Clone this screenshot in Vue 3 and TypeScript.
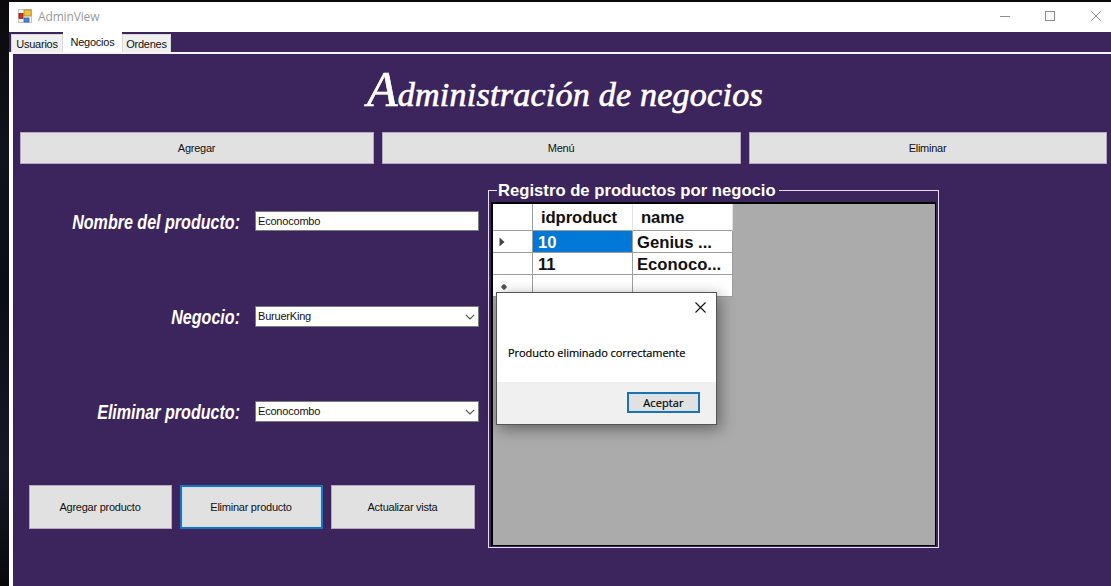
<script setup lang="ts">
import { ref } from 'vue'

interface Field {
  label: string
  value: string
  combo: boolean
}

const tabs = ['Usuarios', 'Negocios', 'Ordenes']
const activeTab = ref('Negocios')
const sections = ['Agregar', 'Menú', 'Eliminar']
const fields: Field[] = [
  { label: 'Nombre del producto:', value: 'Econocombo', combo: false },
  { label: 'Negocio:', value: 'BuruerKing', combo: true },
  { label: 'Eliminar producto:', value: 'Econocombo', combo: true },
]
const actions = ['Agregar producto', 'Eliminar producto', 'Actualizar vista']
const focusedAction = ref('Eliminar producto')
const rows = [
  { id: '10', name: 'Genius ...' },
  { id: '11', name: 'Econoco...' },
  { id: '', name: '' },
]
</script>

<template>
  <div class="desktop">
    <div class="window">
      <header class="titlebar">
        <svg class="app-icon" width="14" height="14" viewBox="0 0 14 14">
          <rect x="0.5" y="0.5" width="13" height="13" fill="#f4f4f4" stroke="#c4c4c4" />
          <rect x="6" y="1" width="7" height="6" fill="#f3c23c" stroke="#a9862c" stroke-width="0.8" />
          <rect x="1" y="4.5" width="4" height="5" fill="#c8352b" stroke="#8c1d18" stroke-width="0.8" />
          <rect x="6" y="9" width="5" height="4" fill="#4a86d8" stroke="#2c5fa8" stroke-width="0.8" />
        </svg>
        <span class="app-name">AdminView</span>
        <svg class="controls" width="102" height="12" viewBox="0 0 102 12" fill="none" stroke="#8b8b8b">
          <path d="M1 6.5H11" />
          <rect x="46.5" y="1.5" width="9" height="9" />
          <path d="M92 1L102 11M102 1L92 11" />
        </svg>
      </header>
      <nav class="tabs">
        <span
          v-for="tab in tabs"
          :key="tab"
          class="tab"
          :class="{ active: tab === activeTab }"
          @click="activeTab = tab"
        ><span class="tab-text">{{ tab }}</span></span>
      </nav>
      <main class="page">
        <h1 class="title"><span class="title-text"><span class="initial">A</span>dministración de negocios</span></h1>
        <div class="sections">
          <button v-for="s in sections" :key="s" class="btn">{{ s }}</button>
        </div>
        <div class="content">
          <section class="form">
            <div v-for="f in fields" :key="f.label" class="field">
              <label class="label">{{ f.label }}</label>
              <div class="input" :class="{ combo: f.combo }">
                <span>{{ f.value }}</span>
                <svg v-if="f.combo" width="10" height="6" viewBox="0 0 10 6" fill="none" stroke="#505050" stroke-width="1.1">
                  <path d="M0.8 0.8L5 5L9.2 0.8" />
                </svg>
              </div>
            </div>
            <div class="actions">
              <button
                v-for="a in actions"
                :key="a"
                class="btn"
                :class="{ focused: a === focusedAction }"
              >{{ a }}</button>
            </div>
          </section>
          <fieldset class="group">
            <legend>Registro de productos por negocio</legend>
            <div class="grid">
              <div class="table">
                <div class="cell head"></div>
                <div class="cell head">idproduct</div>
                <div class="cell head">name</div>
                <template v-for="(r, i) in rows" :key="i">
                  <div class="cell marker">
                    <svg v-if="i === 0" width="6" height="10" viewBox="0 0 6 10"><path d="M0.5 0.5L5.5 5L0.5 9.5Z" fill="#444" /></svg>
                    <svg v-if="i === 2" class="star" width="6" height="6" viewBox="0 0 6 6"><circle cx="3" cy="3" r="2.4" fill="#555" /><path d="M3 0V6M0 3H6" stroke="#555" /></svg>
                  </div>
                  <div class="cell" :class="{ selected: i === 0 }">{{ r.id }}</div>
                  <div class="cell name">{{ r.name }}</div>
                </template>
              </div>
            </div>
          </fieldset>
        </div>
      </main>
    </div>
    <div class="dialog">
      <div class="dialog-body">
        <svg class="dialog-close" width="11" height="11" viewBox="0 0 11 11" fill="none" stroke="#111" stroke-width="1.1">
          <path d="M0.5 0.5L10.5 10.5M10.5 0.5L0.5 10.5" />
        </svg>
        <p>Producto eliminado correctamente</p>
      </div>
      <div class="dialog-footer"><button class="accept">Aceptar</button></div>
    </div>
  </div>
</template>

<style>
html, body { margin: 0; overflow: hidden; background: #0c0d15; }
</style>

<style scoped>
* { box-sizing: border-box; }
.desktop {
  width: 1111px;
  height: 586px;
  padding: 2px 0 0 9px;
  overflow: hidden;
  background: linear-gradient(180deg, #0b090b 0, #10121c 25%, #0b0d16 50%, #171824 80%, #08080d 100%);
  font-family: "Liberation Sans", Arial, sans-serif;
  font-size: 11px;
  color: #111;
}
.window { height: 584px; display: flex; flex-direction: column; background: #3c245c; }
.titlebar { height: 30px; flex: none; display: flex; align-items: center; padding: 0 10px 2px 9px; background: #fff; }
.app-name { margin-left: 6px; font: 12px "Open Sans", "Noto Sans", sans-serif; color: #9a9a9a; letter-spacing: -0.15px; }
.controls { margin-left: auto; }
.tabs { height: 20px; flex: none; display: flex; align-items: flex-end; padding-left: 2px; }
.tab { height: 18px; display: flex; align-items: center; justify-content: center; background: #f0f0f0; border: 1px solid #d9d9d9; border-bottom: 0; width: 52px; }
.tab:last-child { width: 49px; }
.tab.active { width: 59px; height: 20px; background: #fff; border-color: #fff; padding-bottom: 1px; }
.tab-text { letter-spacing: -0.25px; white-space: nowrap; }
.page { flex: 1; border-top: 2px solid #f6f2fa; border-left: 4px solid #fff; overflow: hidden; }
.title { height: 78px; margin: 0; padding: 2px 0 0 354px; color: #fff; font: italic 400 34px/78px "Edwardian Script ITC", "Palace Script MT", "Liberation Serif", serif; white-space: nowrap; }
.title-text { display: inline-block; -webkit-text-stroke: 0.7px #fff; letter-spacing: 0.25px; }
.initial { font-size: 50px; line-height: 1px; }
.sections { display: grid; grid-template-columns: 354px 359px 358px; gap: 8px; height: 32px; margin-left: 7px; }
.btn { font: 11px "Liberation Sans", Arial, sans-serif; letter-spacing: -0.25px; color: #111; background: #e1e1e1; border: 1px solid #b3a8bf; padding: 0 1px 0 0; border-radius: 0; }
.content { display: flex; }
.form { width: 475px; padding-top: 47px; }
.field { display: flex; align-items: flex-start; height: 95px; }
.label { width: 227px; margin-top: -1px; text-align: right; color: #fff; font: italic bold 19.6px/24px "Liberation Sans", Arial, sans-serif; white-space: nowrap; transform: scaleX(0.82); transform-origin: right; }
.input { width: 224px; height: 20px; margin-left: 15px; padding: 0 3px 0 2px; display: flex; align-items: center; justify-content: space-between; background: #fff; border: 1px solid #7a7a7a; letter-spacing: -0.2px; }
.input.combo { height: 21px; padding-bottom: 1px; }
.input svg { margin-top: 1px; }
.actions { display: grid; grid-template-columns: 143px 143px 144px; gap: 8px; height: 44px; margin: -11px 0 0 16px; }
.btn.focused { border: 2px solid #1f71b8; box-shadow: inset 0 0 0 1px #c5e4f2; }
.group { width: 451px; height: 367px; margin: 17px 0 0; padding: 3px 2px 2px; border: 1px solid #e6def0; min-width: 0; }
.group legend { height: 18px; margin-left: 6px; padding: 0 3px 0 1px; color: #fff; font: bold 16.67px/20px "Liberation Sans", Arial, sans-serif; }
.grid { width: 445px; height: 344px; background: #ababab; border: 1px solid #000; border-width: 2px 1px 1px 2px; }
.table { display: grid; grid-template-columns: 40px 100px 100px; grid-template-rows: 27px 22px 22px 22px; width: 240px; }
.cell { background: #fff; border-right: 1px solid #9d9d9d; border-bottom: 1px solid #9d9d9d; font: bold 16.67px/23px "Liberation Sans", Arial, sans-serif; color: #111; padding-left: 5px; white-space: nowrap; overflow: hidden; }
.cell.name { padding-left: 4px; }
.head { line-height: 28px; padding-left: 8px; border-right-color: #e2e2e2; letter-spacing: -0.1px; }
.head:first-child { border-right-color: #9d9d9d; }
.marker { display: flex; align-items: center; padding-left: 6px; }
.marker .star { margin: 2px 0 0 2px; }
.cell.selected { background: #0078d7; color: #fff; }
.dialog { position: absolute; left: 496px; top: 292px; width: 221px; height: 133px; border: 1px solid #555; background: #fff; box-shadow: 3px 4px 14px rgba(0, 0, 0, 0.42); display: flex; flex-direction: column; font: 11px "Open Sans", "Noto Sans", sans-serif; color: #000; }
.dialog-body { height: 89px; display: flex; flex-direction: column; padding: 9px 10px 0 11px; }
.dialog-close { align-self: flex-end; }
.dialog-body p { margin: 32px 0 0; line-height: 16px; letter-spacing: -0.06px; white-space: nowrap; -webkit-text-stroke: 0.2px #000; }
.dialog-footer { flex: 1; background: #f0f0f0; display: flex; justify-content: flex-end; padding: 10px 16px 0 0; }
.accept { width: 73px; height: 21px; padding: 0; border: 2px solid #1f71b0; background: #e1e1e1; box-shadow: inset 0 0 0 1px #c9e6f3; font: 11px/15px "Open Sans", "Noto Sans", sans-serif; color: #000; letter-spacing: 0.1px; -webkit-text-stroke: 0.2px #000; }
</style>
